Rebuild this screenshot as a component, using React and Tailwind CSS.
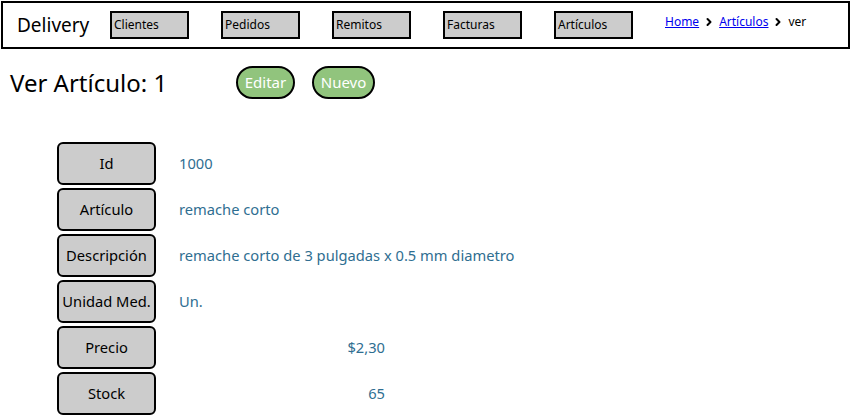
import { ChevronRight } from 'lucide-react';

const NAV = ['Clientes', 'Pedidos', 'Remitos', 'Facturas', 'Artículos'];

const FIELDS = [
  { label: 'Id', value: '1000' },
  { label: 'Artículo', value: 'remache corto' },
  { label: 'Descripción', value: 'remache corto de 3 pulgadas x 0.5 mm diametro' },
  { label: 'Unidad Med.', value: 'Un.' },
  { label: 'Precio', value: '$2,30', right: true },
  { label: 'Stock', value: '65', right: true },
];

const App = () => (
  <div className="w-[857px] h-[417px] bg-white text-black overflow-hidden" style={{ fontFamily: '"Noto Sans", "Open Sans", sans-serif' }}>
    {/* Header */}
    <div className="mt-px ml-px w-[849px] h-[48px] border-2 border-black flex items-center">
      <div className="w-[107px] pl-[14px] text-[19px] leading-none">Delivery</div>
      <div className="flex gap-[32px]">
        {NAV.map(n => (
          <div key={n} className="w-[79px] h-[28px] bg-[#cccccc] border-2 border-black flex items-center pl-[2px] text-[12px]">
            {n}
          </div>
        ))}
      </div>
      <div className="self-start mt-[10px] ml-[32px] flex items-center text-[12px]">
        <span className="text-[#0000ee] underline">Home</span>
        <ChevronRight size={12} strokeWidth={4} className="mx-[4px]" />
        <span className="text-[#0000ee] underline">Artículos</span>
        <ChevronRight size={12} strokeWidth={4} className="mx-[4px]" />
        <span>ver</span>
      </div>
    </div>

    {/* Title */}
    <div className="flex items-center mt-[17px] pl-[10px]">
      <h1 className="w-[226px] text-[24px] leading-none">Ver Artículo: 1</h1>
      <div className="flex gap-[17px]">
        <button className="w-[59px] h-[33px] rounded-full bg-[#91c47d] border-2 border-black text-white text-[15px]">Editar</button>
        <button className="w-[63px] h-[33px] rounded-full bg-[#91c47d] border-2 border-black text-white text-[15px]">Nuevo</button>
      </div>
    </div>

    {/* Fields */}
    <div className="mt-[43px] ml-[57px] flex flex-col gap-[3px]">
      {FIELDS.map(f => (
        <div key={f.label} className="flex items-center">
          <div className="w-[99px] h-[43px] rounded-[6px] bg-[#cccccc] border-2 border-black flex items-center justify-center text-[14.7px]">
            {f.label}
          </div>
          <div className={`ml-[23px] w-[206px] whitespace-nowrap text-[14.7px] text-[#2f6e91] ${f.right ? 'text-right' : ''}`}>
            {f.value}
          </div>
        </div>
      ))}
    </div>
  </div>
);

export default App;
